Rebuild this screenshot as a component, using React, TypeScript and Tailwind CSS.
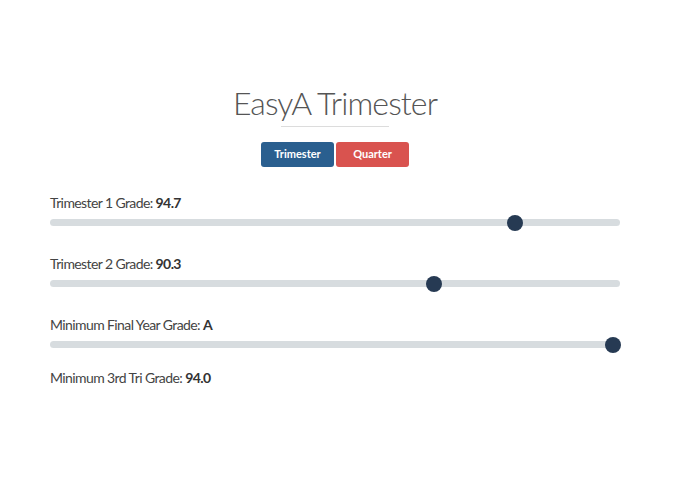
import React from "react";

const sliders = [
  { label: "Trimester 1 Grade:", value: "94.7", pct: 0.823 },
  { label: "Trimester 2 Grade:", value: "90.3", pct: 0.677 },
  { label: "Minimum Final Year Grade:", value: "A", pct: 1 },
];

function Slider({ pct }: { pct: number }) {
  // thumb is 16px wide, travel is track width minus thumb
  return (
    <div className="relative h-[7px] w-full rounded-full bg-[#d7dcdf]">
      <div
        className="absolute top-1/2 h-4 w-4 -translate-y-1/2 rounded-full bg-[#263a53]"
        style={{ left: `calc(${pct} * (100% - 15px))` }}
      />
    </div>
  );
}

export default function App() {
  return (
    <div className="min-h-[494px] w-[695px] bg-white font-['Lato','Liberation_Sans',sans-serif] text-[#444]">
      <div className="ml-[50px] w-[570px] pt-[84px]">
        <h1 className="text-center text-[32px] font-light leading-[38px] tracking-[-0.9px] text-[#555]">EasyA Trimester</h1>
        <div className="mx-auto mt-[4px] h-px w-[108px] bg-[#dcdcdc]" />
        <div className="mt-[15px] flex justify-center gap-[2px]">
          <button className="h-[25px] w-[73px] rounded-[3px] bg-[#2a5f8f] text-[11px] font-bold text-white">
            Trimester
          </button>
          <button className="h-[25px] w-[73px] rounded-[3px] bg-[#d9534f] text-[11px] font-bold text-white">
            Quarter
          </button>
        </div>
        <div className="mt-[28px] flex flex-col gap-[30px]">
          {sliders.map((s) => (
            <div key={s.label} className="flex flex-col gap-[8px]">
              <p className="text-[14px] leading-[16px] tracking-[-0.6px]">
                {s.label} <span className="font-bold text-[#333]">{s.value}</span>
              </p>
              <Slider pct={s.pct} />
            </div>
          ))}
        </div>
        <p className="mt-[22px] text-[14px] leading-[16px] tracking-[-0.6px]">
          Minimum 3rd Tri Grade: <span className="font-bold text-[#333]">94.0</span>
        </p>
      </div>
    </div>
  );
}
